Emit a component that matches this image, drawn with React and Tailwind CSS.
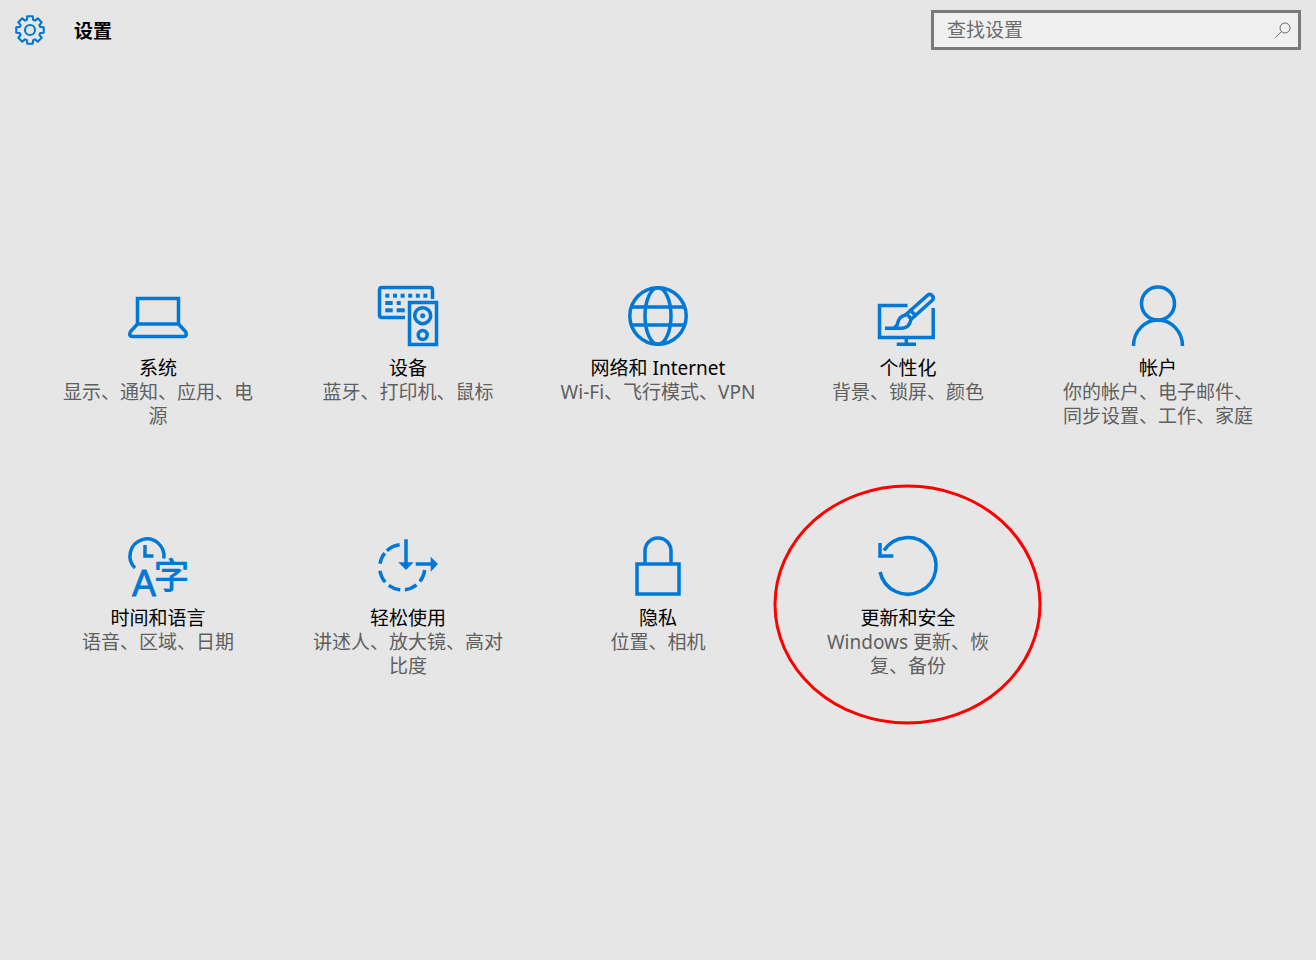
import React from 'react';

const BLUE = '#0078d7';

// 8 tooth gear outline for the header icon
const gearPath = () => {
  const pts = [];
  for (let i = 0; i < 8; i++) {
    const a = (i * Math.PI) / 4 - Math.PI / 2;
    [[-0.3, 10.6], [-0.2, 14], [0.2, 14], [0.3, 10.6]].forEach(([d, r]) => {
      pts.push(`${(15 + r * Math.cos(a + d)).toFixed(2)} ${(15 + r * Math.sin(a + d)).toFixed(2)}`);
    });
  }
  return `M${pts.join('L')}Z`;
};

const Icon = ({ children }) => (
  <svg width="60" height="60" viewBox="0 0 60 60" fill="none" stroke={BLUE} strokeWidth="3.5" className="block shrink-0 overflow-visible">
    {children}
  </svg>
);

const LaptopIcon = () => (
  <Icon>
    <path d="M9.5 38V12.5H50.5V38" />
    <path d="M9.5 38H50.5L57.5 45.5Q59.8 50.5 55.5 50.5H4.5Q0.2 50.5 2.5 45.5Z" />
  </Icon>
);

const DeviceIcon = () => (
  <Icon>
    <path d="M54.5 13V4Q54.5 1.5 52 1.5H4Q1.5 1.5 1.5 4V29Q1.5 31.5 4 31.5H27" />
    <rect x="31.5" y="16.5" width="27" height="42" />
    <circle cx="44.7" cy="29.7" r="8" />
    <circle cx="44.7" cy="49" r="4.5" />
    <circle cx="44.7" cy="29.7" r="2.5" fill={BLUE} stroke="none" />
    <g fill={BLUE} stroke="none">
      <rect x="7.3" y="7.7" width="4" height="4" />
      <rect x="15" y="7.7" width="4" height="4" />
      <rect x="22.6" y="7.7" width="4" height="4" />
      <rect x="30.2" y="7.7" width="4" height="4" />
      <rect x="37.8" y="7.7" width="4" height="4" />
      <rect x="45.4" y="7.7" width="4" height="4" />
      <rect x="7.3" y="15" width="7.4" height="4" />
      <rect x="18.7" y="15" width="4" height="4" />
      <rect x="7.3" y="22.3" width="7.4" height="4" />
      <rect x="18.7" y="22.3" width="8" height="4" />
    </g>
  </Icon>
);

const GlobeIcon = () => (
  <Icon>
    <circle cx="30" cy="30" r="28.2" />
    <ellipse cx="30" cy="30" rx="13" ry="28.2" />
    <path d="M3.5 21H56.5M3.5 39H56.5" />
  </Icon>
);

const BrushIcon = () => (
  <Icon>
    <path d="M29.5 19.5H1.5V51.5H55.2V22" />
    <path d="M28.3 52V58.3M18.7 58.3H38" />
    <path d="M32.7 24.3L49.7 9.1A3.5 3.5 0 0 1 54.3 14.3L37.3 29.5Z" />
    <path d="M32.7 24.3L28.7 27.9L33.3 33.1L37.3 29.5" />
    <path d="M28 29Q21.5 30 20 36Q19.5 40.5 15 42.3H7M15 42.3H24Q31.5 42 33 33" />
  </Icon>
);

const PersonIcon = () => (
  <Icon>
    <circle cx="30" cy="17.5" r="16.5" />
    <path d="M5.5 60A24.5 26 0 0 1 54.5 60" />
  </Icon>
);

const TimeLanguageIcon = () => (
  <Icon>
    <path d="M7 32A17 17 0 1 1 35.8 22.5" />
    <path d="M17 9V20H25.5" />
    <text x="4" y="59.7" fill={BLUE} stroke={BLUE} strokeWidth="0.8" fontSize="36" fontFamily='"Liberation Sans", sans-serif'>A</text>
    <text x="25.4" y="52.5" fill={BLUE} stroke="none" fontSize="36" fontWeight="500" fontFamily='"Noto Sans CJK SC", sans-serif'>字</text>
  </Icon>
);

const EaseIcon = () => (
  <Icon>
    <circle
      cx="24.3"
      cy="31.3"
      r="22.6"
      pathLength="360"
      strokeDasharray="32 12 32 12 32 12 32 18 30 8 36 104"
      transform="rotate(7 24.3 31.3)"
    />
    <path d="M28 3.3V27M37.7 28H53" />
    <path d="M20.3 26.3H35.7L28 34ZM52.7 20.7L60 28L52.7 35.7Z" fill={BLUE} stroke="none" />
  </Icon>
);

const LockIcon = () => (
  <Icon>
    <path d="M17 27V15A13 13 0 0 1 43 15V27" />
    <rect x="9" y="28" width="42" height="30" />
  </Icon>
);

const UpdateIcon = () => (
  <Icon>
    <path d="M2.1 36A28.3 28.3 0 1 0 6 14.5" />
    <path d="M2 7V20H15.3" />
  </Icon>
);

const tiles = [
  { icon: LaptopIcon, title: '系统', desc: '显示、通知、应用、电源' },
  { icon: DeviceIcon, title: '设备', desc: '蓝牙、打印机、鼠标' },
  { icon: GlobeIcon, title: '网络和 Internet', desc: 'Wi-Fi、飞行模式、VPN' },
  { icon: BrushIcon, title: '个性化', desc: '背景、锁屏、颜色' },
  { icon: PersonIcon, title: '帐户', desc: '你的帐户、电子邮件、同步设置、工作、家庭' },
  { icon: TimeLanguageIcon, title: '时间和语言', desc: '语音、区域、日期' },
  { icon: EaseIcon, title: '轻松使用', desc: '讲述人、放大镜、高对比度' },
  { icon: LockIcon, title: '隐私', desc: '位置、相机' },
  { icon: UpdateIcon, title: '更新和安全', desc: 'Windows 更新、恢复、备份' },
];

const App = () => {
  return (
    <div className="relative h-[960px] w-[1316px] overflow-hidden bg-[#e6e6e6] font-['Noto_Sans','Noto_Sans_CJK_SC',sans-serif] text-[19px] leading-6">
      {/* header */}
      <div className="flex h-[60px] items-start pl-[15px] pr-[15px] pt-[10px]">
        <svg width="30" height="30" viewBox="0 0 30 30" fill="none" stroke={BLUE} strokeWidth="2.1" strokeLinejoin="round" className="mt-[5px] shrink-0 overflow-visible">
          <path d={gearPath()} />
          <circle cx="15" cy="15" r="5" />
        </svg>
        <div className="ml-[29px] mt-[9px] font-bold text-black">设置</div>
        <div className="ml-auto flex h-10 w-[370px] items-center justify-between border-[3px] border-[#7a7a7a] bg-[#f0f0f0] pb-px pl-[13px] pr-[6px] text-[#6b6b6b]">
          <span>查找设置</span>
          <svg width="18" height="18" viewBox="0 0 18 18" fill="none" stroke="#6b6b6b" strokeWidth="1" className="shrink-0">
            <circle cx="11" cy="7" r="5" />
            <path d="M7.5 10.5L1.5 16.5" />
          </svg>
        </div>
      </div>

      {/* settings tiles */}
      <div className="ml-[33px] mt-[226px] grid grid-cols-[repeat(5,250px)] auto-rows-[250px]">
        {tiles.map((tile) => (
          <div key={tile.title} className="flex flex-col items-center text-center">
            <tile.icon />
            <div className="mt-[10px] text-black">{tile.title}</div>
            <div className="w-[200px] text-[#5f5f5f]">{tile.desc}</div>
          </div>
        ))}
      </div>

      {/* red annotation circle */}
      <svg width="270" height="244" viewBox="0 0 270 244" fill="none" className="absolute left-[773px] top-[483px]">
        <ellipse cx="134.5" cy="121.5" rx="132.5" ry="118.5" stroke="#ff0000" strokeWidth="3" />
      </svg>
    </div>
  );
};

export default App;
